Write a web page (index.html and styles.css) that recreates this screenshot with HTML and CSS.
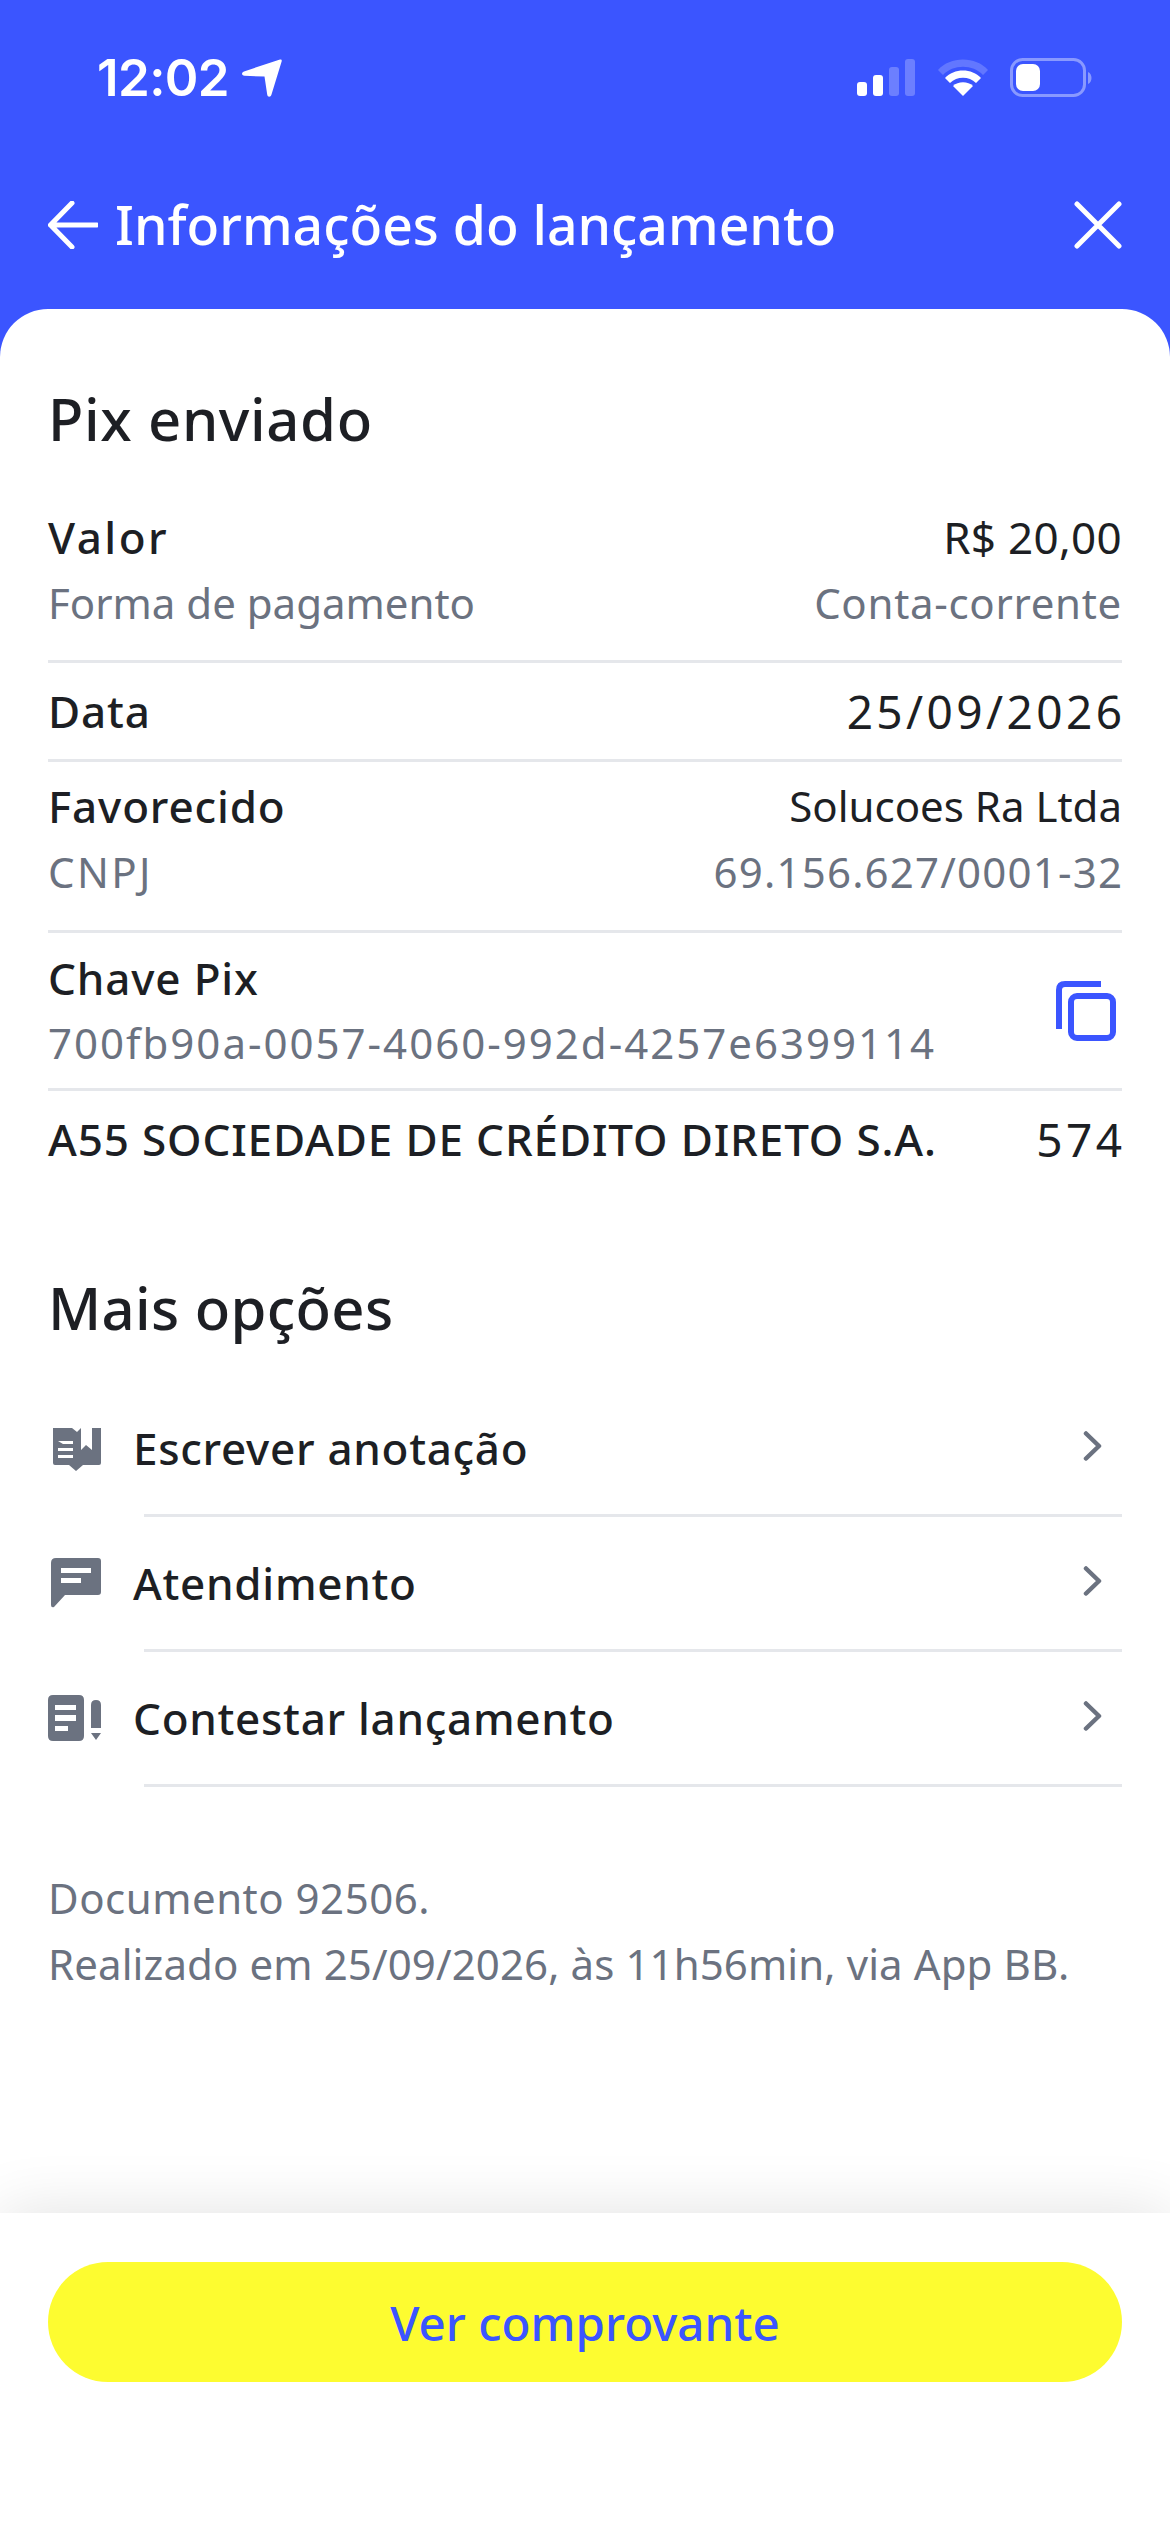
FILE: index.html
```html
<!DOCTYPE html>
<html lang="pt-BR">
<head>
<meta charset="utf-8">
<title>Informações do lançamento</title>
<link rel="stylesheet" href="styles.css">
</head>
<body>
<header class="top">
  <div class="status">
    <div class="status-left">
      <span class="time">12:02</span>
      <svg class="loc" viewBox="0 0 40 38" width="40" height="38"><path d="M38 0.5 C39.3 0.2 40 1 39.7 2.2 L29.5 35.5 C28.6 38.6 25.6 38.4 25.2 35.5 L22.5 17.5 L2.5 16.8 C-0.6 16.6 -0.8 13.6 2 12.4 Z" fill="#fff"/></svg>
    </div>
    <svg class="sys" viewBox="0 0 235 40" width="235" height="40">
      <rect x="0" y="24" width="10" height="14" rx="3" fill="#fff"/>
      <rect x="16" y="17" width="10" height="21" rx="3" fill="#fff"/>
      <rect x="32" y="9" width="10" height="29" rx="3" fill="#fff" opacity=".25"/>
      <rect x="48" y="1" width="10" height="37" rx="3" fill="#fff" opacity=".25"/>
      <path d="M81 12 C93 -2 119 -2 131 12 L126 17 C116 6 96 6 86 17 Z" fill="#fff" opacity=".2"/>
      <path d="M88 20 C97 10 115 10 124 20 L119 25 C112 18 100 18 93 25 Z" fill="#fff"/>
      <path d="M96 28 C101 23 111 23 116 28 L106 38 Z" fill="#fff"/>
      <rect x="154.500" y="1.500" width="73" height="36" rx="11" fill="none" stroke="#fff" stroke-width="3" opacity=".4"/>
      <rect x="159" y="6" width="24" height="27" rx="7" fill="#fff"/>
      <path d="M231 14 C233.500 15 234.500 17.500 234.500 20 C234.500 22.500 233.500 25 231 26 Z" fill="#fff" opacity=".4"/>
    </svg>
  </div>
  <div class="bar">
    <svg class="nav-ic" viewBox="0 0 50 48" width="50" height="48"><path d="M24 2 L2.500 24 L24 46 M2.500 24 H49" fill="none" stroke="#fff" stroke-width="5" stroke-linecap="round" stroke-linejoin="round"/></svg>
    <h1 class="title">Informações do lançamento</h1>
    <svg class="nav-ic" viewBox="0 0 48 48" width="48" height="48"><path d="M3 3 L45 45 M45 3 L3 45" fill="none" stroke="#fff" stroke-width="5" stroke-linecap="round"/></svg>
  </div>
</header>

<main class="card">
  <h2 class="heading">Pix enviado</h2>

  <section class="group g1">
    <div class="row"><span class="label valor">Valor</span><span class="amount">R$ 20,00</span></div>
    <div class="row muted"><span>Forma de pagamento</span><span class="account">Conta-corrente</span></div>
  </section>
  <section class="group g2">
    <div class="row"><span class="label">Data</span><span class="num">25/09/2026</span></div>
  </section>
  <section class="group g3">
    <div class="row"><span class="label">Favorecido</span><span>Solucoes Ra Ltda</span></div>
    <div class="row muted"><span class="cnpj-label">CNPJ</span><span class="cnpj">69.156.627/0001-32</span></div>
  </section>
  <section class="group g4">
    <div class="key">
      <div class="row"><span class="label">Chave Pix</span></div>
      <div class="row muted"><span class="hash">700fb90a-0057-4060-992d-4257e6399114</span></div>
    </div>
    <svg class="copy" viewBox="0 0 60 60" width="60" height="60"><path d="M3 48 V9 Q3 3 9 3 H45" fill="none" stroke="#3b55ff" stroke-width="6"/><rect x="15" y="15" width="42" height="42" rx="6" fill="none" stroke="#3b55ff" stroke-width="6"/></svg>
  </section>
  <section class="group g5">
    <div class="row"><span class="label">A55 SOCIEDADE DE CRÉDITO DIRETO S.A.</span><span class="num">574</span></div>
  </section>

  <h2 class="heading more">Mais opções</h2>

  <nav class="menu">
    <a class="item">
      <svg class="ic ic-book" viewBox="0 0 54 46" width="54" height="46"><path fill-rule="evenodd" fill="#6b7280" d="M5 1 H24 L29 5 L33 1 V23 L38 18 L44 23 V1 H53 V36 Q53 38 51 38 H35 L28 44 L21 38 H7 Q5 38 5 36 Z M10 14 H25 V17 H15 Z M10 21 H25 V24 H10 Z M10 28 H25 V31 H10 Z"/></svg>
      <span>Escrever anotação</span>
      <svg class="chev" viewBox="0 0 20 30" width="20" height="30"><path d="M3 2.500 L16 15 L3 27.500" fill="none" stroke="#6b7280" stroke-width="4.500" stroke-linecap="round" stroke-linejoin="round"/></svg>
    </a>
    <div class="rule"></div>
    <a class="item">
      <svg class="ic" viewBox="0 0 54 50" width="54" height="50"><path fill-rule="evenodd" fill="#6b7280" d="M8 0 H50 Q53 0 53 3 V34 Q53 37 50 37 H17 L6 49 Q3 50 3 47 V5 Q3 0 8 0 Z M13 10 H43 V15 H13 Z M13 20 H33 V25 H13 Z"/></svg>
      <span>Atendimento</span>
      <svg class="chev" viewBox="0 0 20 30" width="20" height="30"><path d="M3 2.500 L16 15 L3 27.500" fill="none" stroke="#6b7280" stroke-width="4.500" stroke-linecap="round" stroke-linejoin="round"/></svg>
    </a>
    <div class="rule"></div>
    <a class="item">
      <svg class="ic" viewBox="0 0 54 46" width="54" height="46"><path fill-rule="evenodd" fill="#6b7280" d="M5 0 H31 Q36 0 36 5 V41 Q36 46 31 46 H5 Q0 46 0 41 V5 Q0 0 5 0 Z M7 10 H28 V15 H7 Z M7 20 H28 V26 H7 Z M7 31 H20 V36 H7 Z"/><path fill="#6b7280" d="M43 10 Q43 5 48 5 Q53 5 53 10 V33 H43 Z M43 38 H53 L48 45 Z"/></svg>
      <span>Contestar lançamento</span>
      <svg class="chev" viewBox="0 0 20 30" width="20" height="30"><path d="M3 2.500 L16 15 L3 27.500" fill="none" stroke="#6b7280" stroke-width="4.500" stroke-linecap="round" stroke-linejoin="round"/></svg>
    </a>
    <div class="rule"></div>
  </nav>

  <p class="note"><span class="doc">Documento 92506.</span><br>Realizado em 25/09/2026, às 11h56min, via App BB.</p>
</main>

<footer class="foot">
  <button class="cta" type="button">Ver comprovante</button>
</footer>
</body>
</html>
```

FILE: styles.css
```css
* { box-sizing: border-box; }
html, body { margin: 0; padding: 0; }
body {
  width: 1170px;
  height: 2532px;
  display: flex;
  flex-direction: column;
  background: #3b55ff;
  font-family: "Noto Sans", "Open Sans", sans-serif;
  color: #1d1f24;
  overflow: hidden;
}
.top { height: 309px; flex: none; padding: 0 48px; color: #fff; }
.status { display: flex; justify-content: space-between; align-items: flex-start; padding: 58px 30px 0 49px; height: 195px; }
.status-left { display: flex; align-items: flex-start; gap: 13px; }
.time { font-family: Inter, sans-serif; font-weight: 600; font-size: 51px; line-height: 40px; letter-spacing: -.6px; }
.loc { display: block; margin-top: 1px; }
.sys { display: block; }
.bar { display: flex; align-items: center; height: 60px; }
.title { flex: 1; margin: 0 0 0 17px; font-size: 53.500px; font-weight: 500; line-height: 60px; white-space: nowrap; }
.nav-ic { display: block; flex: none; }

.card {
  flex: 1;
  background: #fff;
  border-radius: 48px 48px 0 0;
  padding: 0 48px;
  position: relative;
  z-index: 0;
}
.heading { margin: 0; font-size: 58px; font-weight: 500; line-height: 80px; letter-spacing: .6px; }
.card > .heading:first-child { margin-top: 70px; }
.group { border-bottom: 3px solid #e5e7eb; display: flex; flex-direction: column; }
.row { display: flex; justify-content: space-between; align-items: center; font-size: 42px; line-height: 64px; white-space: nowrap; }
.label { font-size: 44px; font-weight: 500; letter-spacing: .85px; }
.valor { letter-spacing: 2.500px; }
.amount { font-size: 44px; letter-spacing: .3px; }
.account { letter-spacing: .7px; }
.num { font-size: 46px; letter-spacing: 3.400px; margin-right: -3.400px; }
.cnpj { letter-spacing: 1.200px; margin-right: -1.200px; }
.cnpj-label { letter-spacing: 2.400px; }
.hash { letter-spacing: 2px; }
.muted { color: #6b7280; }
.g1 { padding: 46px 0 25px; gap: 2px; }
.g2 { padding: 16px 0 16px; }
.g3 { padding: 12px 0 26px; gap: 2px; }
.g4 { padding: 13px 0 13px; flex-direction: row; justify-content: space-between; align-items: center; }
.g5 { padding: 16px 0 0; border-bottom: 0; }
.key { display: flex; flex-direction: column; gap: 1px; }
.copy { display: block; margin-right: 6px; }
.more { margin-top: 97px; letter-spacing: .3px; }
.menu { margin-top: 34px; }
.item { display: flex; align-items: center; height: 132px; font-size: 44px; font-weight: 500; letter-spacing: .7px; }
.ic { display: block; flex: none; margin-right: 31px; }
.ic-book { margin-top: 3px; }
.item span { flex: 1; }
.chev { display: block; flex: none; margin: 0 19px 4px 0; }
.rule { height: 3px; margin-left: 96px; background: #e5e7eb; }
.note { margin: 78px 0 0; font-size: 42px; line-height: 66px; color: #6b7280; letter-spacing: .1px; }
.doc { letter-spacing: .5px; }

.foot {
  flex: none;
  height: 319px;
  padding: 49px 48px 0;
  background: #fff;
  box-shadow: 0 0 60px rgba(0, 0, 0, .12);
  position: relative;
  z-index: 1;
}
.cta {
  display: block;
  width: 100%;
  height: 120px;
  border: 0;
  border-radius: 60px;
  background: #fdfc30;
  color: #3b55ff;
  font-family: inherit;
  font-size: 47.500px;
  font-weight: 500;
}
```
